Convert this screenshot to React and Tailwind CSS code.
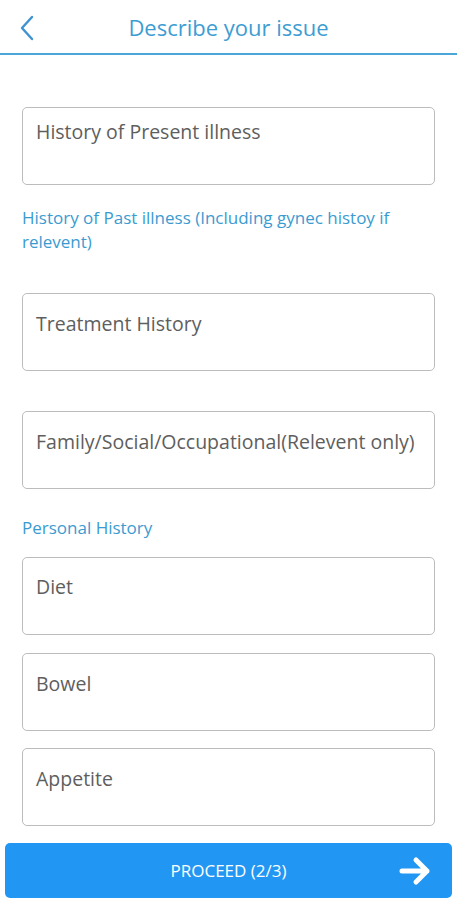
import React from 'react';

const Field = ({ label, className = '' }) => (
    <div className={`h-[78px] rounded-[5px] border border-[#bcbcbc] px-[13px] ${className}`}>
        <span className="text-[19.5px] leading-[26px] text-[#5e5e5e]">{label}</span>
    </div>
);

const App = () => {
    return (
        <div className="w-[457px] h-[900px] bg-white overflow-hidden" style={{ fontFamily: '"Open Sans", "Noto Sans", sans-serif' }}>
            {/* header */}
            <div className="relative h-[55px] flex items-center justify-center border-b-2 border-[#4aa7d8]">
                <svg className="absolute left-[18px] top-[15px] w-[18px] h-[26px]" viewBox="0 0 18 26" fill="none" stroke="#3f93d1" strokeWidth={2.4} strokeLinecap="round" strokeLinejoin="round">
                    <path d="M14 2 L4 13 L14 24" />
                </svg>
                <h1 className="text-[22px] leading-[30px] text-[#3d9dd3] mt-[1px]">Describe your issue</h1>
            </div>

            <div className="px-[22px]">
                {/* first field sits a bit higher inside its box than the rest */}
                <Field label="History of Present illness" className="mt-[52px] pt-[11px]" />

                <p className="mt-[21px] text-[17px] leading-[24px] text-[#3b9bd1]">
                    History of Past illness (Including gynec histoy if relevent)
                </p>

                <Field label="Treatment History" className="mt-[39px] pt-[17px]" />
                <Field label="Family/Social/Occupational(Relevent only)" className="mt-[40px] pt-[17px]" />

                <p className="mt-[27px] text-[17px] leading-[24px] text-[#3b9bd1]">Personal History</p>

                <Field label="Diet" className="mt-[17px] pt-[16px]" />
                <Field label="Bowel" className="mt-[18px] pt-[17px]" />
                <Field label="Appetite" className="mt-[17px] pt-[17px]" />
            </div>

            <button className="relative mx-[5px] mt-[17px] w-[447px] h-[55px] rounded-[5px] bg-[#2196f3] flex items-center justify-center">
                <span className="text-[17px] text-white">PROCEED (2/3)</span>
                <svg className="absolute right-[20px] top-[13px] w-[34px] h-[30px]" viewBox="0 0 34 30" fill="none" stroke="white" strokeWidth={5} strokeLinecap="round" strokeLinejoin="round">
                    <path d="M4 15 H29 M18 4 L29 15 L18 26" />
                </svg>
            </button>
        </div>
    );
};

export default App;
